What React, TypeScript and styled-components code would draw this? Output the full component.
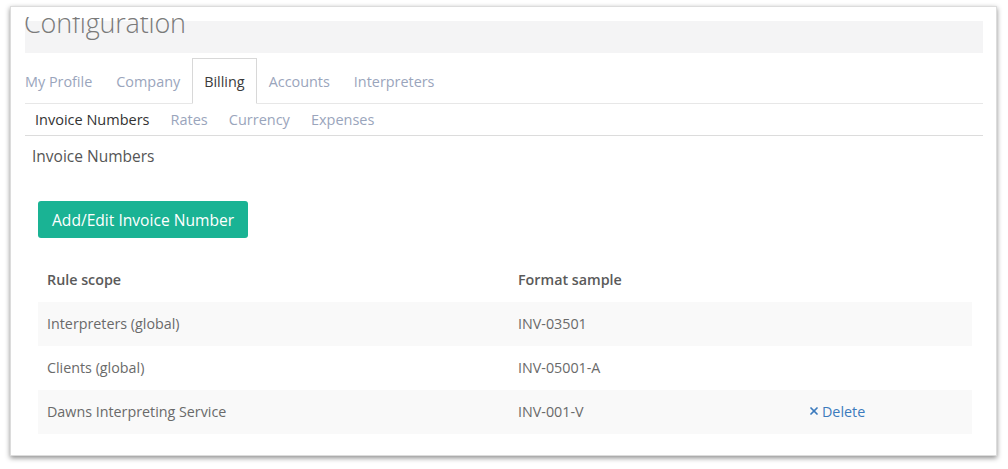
import React from 'react'
import styled, { createGlobalStyle } from 'styled-components'
import { X } from 'lucide-react'

const GlobalStyle = createGlobalStyle`
  html, body {
    margin: 0;
    padding: 0;
    background: #fff;
    font-family: "Open Sans", "Liberation Sans", Arial, sans-serif;
    color: #676a6c;
  }
`

const Page = styled.div`
  padding: 6px 11px 14px 10px;
`

const Panel = styled.div`
  background: #fff;
  border: 1px solid #dcdcdc;
  box-shadow: 0 2px 5px rgba(0, 0, 0, 0.45);
  padding: 10px 13px 21px 14px;
`

const TitleClip = styled.div`
  height: 36px;
  overflow: hidden;
  background: linear-gradient(#fff 4px, #f4f4f5 4px);
`

const Title = styled.h1`
  margin: -8px 0 0 -1px;
  font-size: 27px;
  line-height: 27px;
  font-weight: 300;
  letter-spacing: -0.2px;
  color: #7a7a7a;
`

const TabList = styled.div`
  display: flex;
  margin-top: 5px;
  border-bottom: 1px solid #e7e7e7;
`

const Tab = styled.div<{ $active?: boolean }>`
  height: 46px;
  box-sizing: border-box;
  display: flex;
  align-items: center;
  padding: 0 11px;
  margin-bottom: -1px;
  font-size: 14.4px;
  color: ${(p) => (p.$active ? '#3a3a3a' : '#9aa5bc')};
  background: ${(p) => (p.$active ? '#fff' : 'transparent')};
  border: 1px solid ${(p) => (p.$active ? '#d8d8d8' : 'transparent')};
  border-bottom-color: ${(p) => (p.$active ? '#fff' : 'transparent')};

  &:first-child {
    padding-left: 0;
    border-left: 0;
  }
`

const SubTabList = styled.div`
  display: flex;
  border-bottom: 1px solid #dcdcdc;
`

const SubTab = styled.div<{ $active?: boolean }>`
  height: 31px;
  display: flex;
  align-items: center;
  padding: 0 11px 0 10px;
  font-size: 14.5px;
  color: ${(p) => (p.$active ? '#333' : '#9aa5bc')};
`

const Heading = styled.h2`
  margin: 10px 0 0 7px;
  font-size: 15.5px;
  line-height: 20px;
  font-weight: 400;
  color: #555;
`

const Body = styled.div`
  padding: 0 11px 0 13px;
`

const PrimaryButton = styled.button`
  margin-top: 35px;
  height: 37px;
  padding: 0 14px;
  background: #1ab394;
  border: 0;
  border-radius: 3px;
  color: #fff;
  font-family: inherit;
  font-size: 15.6px;
  cursor: pointer;
`

const Table = styled.div`
  margin-top: 20px;
`

const Row = styled.div<{ $striped?: boolean }>`
  display: grid;
  grid-template-columns: 471px 290px 1fr;
  height: 44px;
  align-items: center;
  background: ${(p) => (p.$striped ? '#f9f9f9' : '#fff')};
`

const Cell = styled.div<{ $head?: boolean }>`
  padding-left: 9px;
  padding-bottom: 1px;
  font-size: 14.3px;
  font-weight: ${(p) => (p.$head ? 600 : 400)};
  color: ${(p) => (p.$head ? '#5a5a5a' : '#6a6a6a')};
`

const DeleteLink = styled.a`
  display: inline-flex;
  align-items: center;
  gap: 2px;
  color: #3c7bbd;
  font-size: 14.3px;
  text-decoration: none;
  cursor: pointer;
`

const rows = [
  { scope: 'Interpreters (global)', sample: 'INV-03501', deletable: false },
  { scope: 'Clients (global)', sample: 'INV-05001-A', deletable: false },
  { scope: 'Dawns Interpreting Service', sample: 'INV-001-V', deletable: true },
]

const App: React.FC = () => {
  return (
    <>
      <GlobalStyle />
      <Page>
        <Panel>
          <TitleClip>
            <Title>Configuration</Title>
          </TitleClip>

          <TabList>
            <Tab>My Profile</Tab>
            <Tab>Company</Tab>
            <Tab $active>Billing</Tab>
            <Tab>Accounts</Tab>
            <Tab>Interpreters</Tab>
          </TabList>

          <SubTabList>
            <SubTab $active>Invoice Numbers</SubTab>
            <SubTab>Rates</SubTab>
            <SubTab>Currency</SubTab>
            <SubTab>Expenses</SubTab>
          </SubTabList>

          <Heading>Invoice Numbers</Heading>

          <Body>
            <PrimaryButton>Add/Edit Invoice Number</PrimaryButton>

            <Table>
              <Row>
                <Cell $head>Rule scope</Cell>
                <Cell $head>Format sample</Cell>
                <Cell />
              </Row>
              {rows.map((r, i) => (
                <Row key={r.sample} $striped={i % 2 === 0}>
                  <Cell>{r.scope}</Cell>
                  <Cell>{r.sample}</Cell>
                  <Cell>
                    {r.deletable && (
                      <DeleteLink>
                        <X size={12} strokeWidth={3.5} />
                        Delete
                      </DeleteLink>
                    )}
                  </Cell>
                </Row>
              ))}
            </Table>
          </Body>
        </Panel>
      </Page>
    </>
  )
}

export default App
